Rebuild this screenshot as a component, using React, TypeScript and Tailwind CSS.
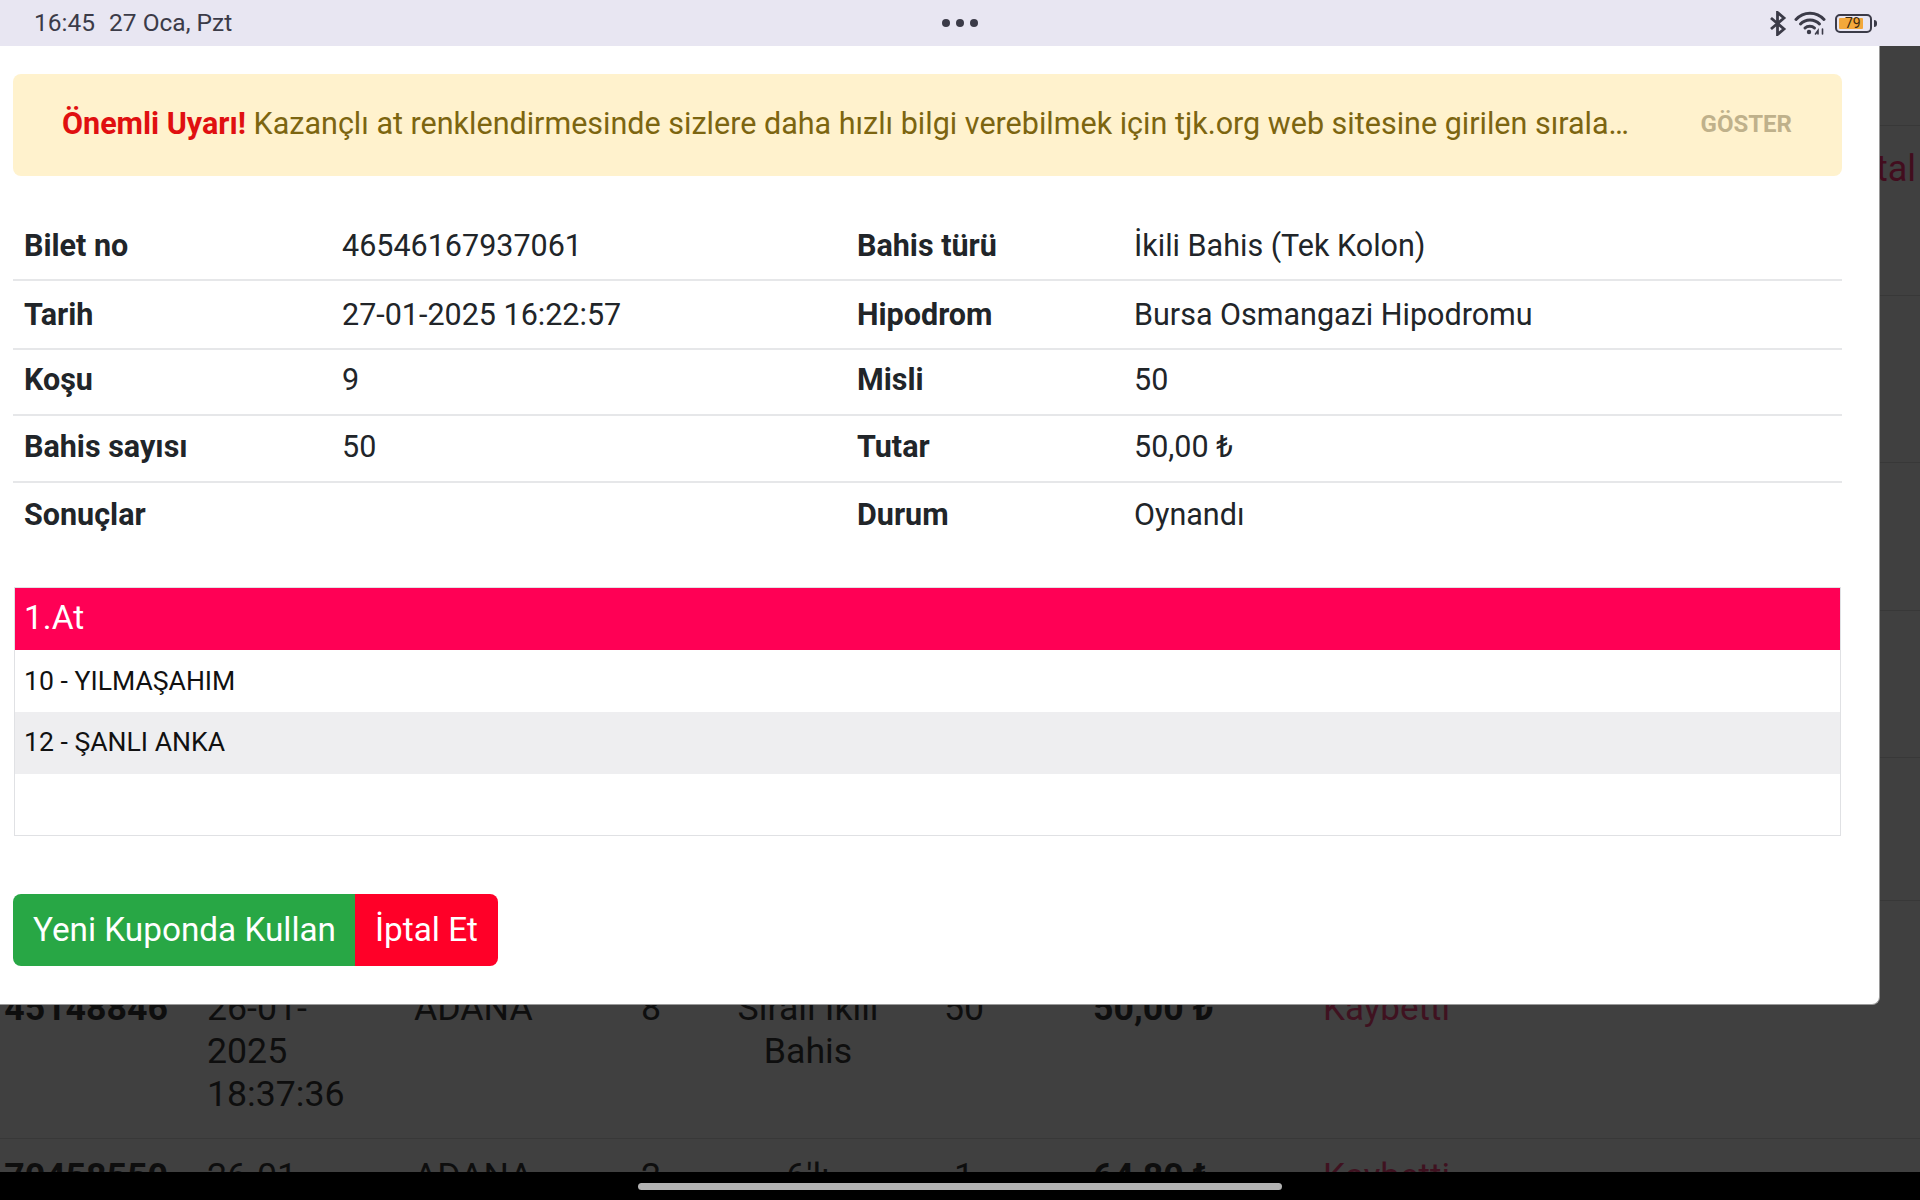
import React from "react";

const info = [
  ["Bilet no", "46546167937061", "Bahis türü", "İkili Bahis (Tek Kolon)", "h-[68px]"],
  ["Tarih", "27-01-2025 16:22:57", "Hipodrom", "Bursa Osmangazi Hipodromu", "h-[69px]"],
  ["Koşu", "9", "Misli", "50", "h-[66px] pb-[4px]"],
  ["Bahis sayısı", "50", "Tutar", "50,00 ₺", "h-[67px] pb-[4px]"],
  ["Sonuçlar", "", "Durum", "Oynandı", "h-[65px] pb-[2px]"],
];

function StatusIcons() {
  return (
    <div className="flex items-center">
      <svg width="18" height="25" viewBox="0 0 18 25" fill="none" stroke="#3b3b48" strokeWidth="2.8" className="mr-[7px]">
        <path d="M2 7l13 11-6.500 5.500V1.500L15 7 2 18" />
      </svg>
      <svg width="32" height="24" viewBox="0 0 32 24" fill="none" stroke="#3b3b48" strokeWidth="3" strokeLinecap="round" className="mr-[9px]">
        <path d="M2 8.500c7.500-8.500 20.500-8.500 28 0" />
        <path d="M6.500 13c5-5.500 14-5.500 19 0" />
        <path d="M11 17c2.500-2.500 7-2.500 9.500 0" />
        <circle cx="15" cy="21" r="2.200" fill="#3b3b48" stroke="none" />
        <path d="M24 23v-3.500l-2.500 3.500M28.500 18v5" strokeWidth="1.600" />
      </svg>
      <div className="relative h-[19px] w-[37px] rounded-[5px] border-2 border-[#3b3b48] p-[2px]">
        <div className="h-full w-[24px] rounded-[1px] bg-[#f3a83b]" />
        <span className="absolute left-[8px] top-[-2px] text-[14px] leading-[19px] text-[#3b2a10]">79</span>
      </div>
      <div className="ml-[2px] h-[7px] w-[3px] rounded-r-sm bg-[#3b3b48]" />
    </div>
  );
}

function BgRow({ h, children, className = "" }: { h: string; children?: React.ReactNode; className?: string }) {
  return <div className={`border-b border-[#383838] ${h} ${className}`}>{children}</div>;
}

function TicketRow({ no, date, num, type, count, amount }: { no: string; date: string[]; num: string; type: string[]; count: string; amount: string }) {
  return (
    <div className="grid grid-cols-[207px_207px_190px_120px_168px_144px_287px_1fr] text-[35.700px] leading-[43px] text-[#0e0e0e]">
      <div className="pr-[39px] text-right font-bold">{no}</div>
      <div>{date.map((d) => <div key={d}>{d}</div>)}</div>
      <div>ADANA</div>
      <div className="pl-[37px]">{num}</div>
      <div className="text-center">{type.map((d) => <div key={d}>{d}</div>)}</div>
      <div className="text-center">{count}</div>
      <div className="whitespace-nowrap pl-[57px] font-bold">{amount}</div>
      <div className="text-[35px] text-[#3f1220]">Kaybetti</div>
    </div>
  );
}

export default function App() {
  return (
    <div className="flex h-[1200px] w-[1920px] flex-col overflow-hidden bg-black font-[family-name:Roboto,sans-serif]">
      <header className="relative flex h-[46px] shrink-0 items-center justify-between bg-[#e8e6f2] pl-[34px] pr-[43px] text-[#3b3b48]">
        <div className="flex gap-[14px] text-[24.500px]">
          <span>16:45</span>
          <span>27 Oca, Pzt</span>
        </div>
        <div className="absolute left-[942px] top-[19px] flex gap-[6px]">
          <span className="h-[8px] w-[8px] rounded-full bg-[#3b3b48]" />
          <span className="h-[8px] w-[8px] rounded-full bg-[#3b3b48]" />
          <span className="h-[8px] w-[8px] rounded-full bg-[#3b3b48]" />
        </div>
        <StatusIcons />
      </header>

      <main className="relative flex-1 overflow-hidden bg-[#404040]">
        <BgRow h="h-[80px]" />
        <BgRow h="h-[170px]" className="pr-[4px] pt-[22px] text-right text-[36px] leading-[42px] text-[#420d1e]">İptal</BgRow>
        <BgRow h="h-[167px]" />
        <BgRow h="h-[148px]" />
        <BgRow h="h-[147px]" />
        <BgRow h="h-[143px]" />
        <BgRow h="h-[238px]" className="pt-[86px]">
          <TicketRow no="45148846" date={["26-01-", "2025", "18:37:36"]} num="8" type={["Sıralı İkili", "Bahis"]} count="50" amount="50,00 ₺" />
        </BgRow>
        <div className="pt-[16px]">
          <TicketRow no="70458550" date={["26-01-", "2025", "18:37:36"]} num="2" type={["6'lı", "Ganyan"]} count="1" amount="64,80 ₺" />
        </div>

        <section className="absolute left-0 top-0 h-[959px] w-[1880px] rounded-br-lg border-b border-r border-[#9a9a9a] bg-white pl-[13px] pr-[37px] pt-[28px]">
          <div className="flex h-[102px] items-center justify-between rounded-lg bg-[#fff2cd] pb-[2px] pl-[49px] pr-[50px] text-[30.500px]">
            <p className="whitespace-nowrap text-[#7c6510]">
              <strong className="font-bold text-[#e01010]">Önemli Uyarı!</strong> Kazançlı at renklendirmesinde sizlere daha hızlı bilgi verebilmek için tjk.org web sitesine girilen sırala…
            </p>
            <span className="text-[24px] font-bold text-[#bfb18b]">GÖSTER</span>
          </div>

          <div className="mt-[37px] text-[30.500px] text-[#212529]">
            {info.map((r, i) => (
              <div key={r[0]} className={`grid grid-cols-[318px_515px_277px_1fr] items-center pl-[11px] ${r[4]} ${i < 4 ? "border-b-2 border-[#e6e7e9]" : ""}`}>
                <div className="font-bold">{r[0]}</div>
                <div>{r[1]}</div>
                <div className="font-bold">{r[2]}</div>
                <div>{r[3]}</div>
              </div>
            ))}
          </div>

          <div className="mx-[1px] mt-[39px] h-[249px] border border-[#e0e1e4] text-[26.600px] text-[#111]">
            <div className="flex h-[62px] items-center bg-[#ff0055] pb-[2px] pl-[9px] text-[33.500px] text-white">1.At</div>
            <div className="flex h-[62px] items-center pl-[9px]">10 - YILMAŞAHIM</div>
            <div className="flex h-[62px] items-center bg-[#eeeef0] pb-[2px] pl-[9px]">12 - ŞANLI ANKA</div>
          </div>

          <div className="mt-[58px] flex h-[72px] text-[33.300px] text-white">
            <button className="rounded-l-lg bg-[#28a745] pl-[20px] pr-[19px]">Yeni Kuponda Kullan</button>
            <button className="rounded-r-lg bg-[#ff0028] px-[20px]">İptal Et</button>
          </div>
        </section>
      </main>

      <footer className="flex h-[28px] shrink-0 justify-center bg-black pt-[11px]">
        <div className="h-[7px] w-[644px] rounded-full bg-[#b3b3b3]" />
      </footer>
    </div>
  );
}
